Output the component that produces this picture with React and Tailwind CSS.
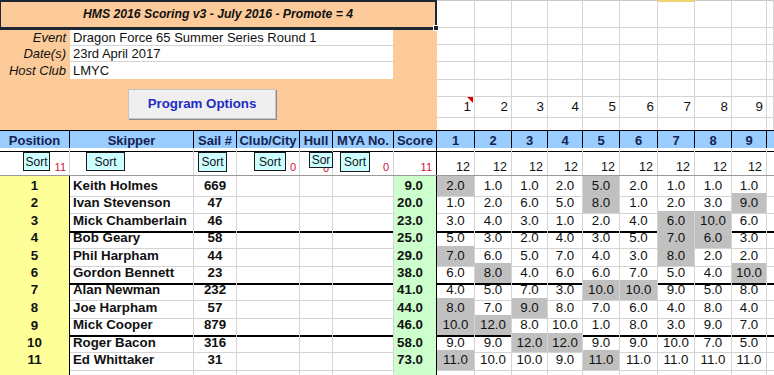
import React from 'react';

// column tracks shared by the header, sort row and result rows
const COLS = 'grid grid-cols-[70px_124px_43px_63px_33px_61px_43px_38px_37px_36px_35px_37px_38px_37px_37px_35px_1fr]';
const RACE_COLS = 'grid grid-cols-[38px_37px_36px_35px_37px_38px_37px_37px_35px_1fr]';

const RACES = [1, 2, 3, 4, 5, 6, 7, 8, 9];

// drop = races thrown out of the total (shaded grey), cut = promotion line under the row
const results = [
    { pos: 1, name: 'Keith Holmes', sail: 669, score: '9.0', races: [2, 1, 1, 2, 5, 2, 1, 1, 1], drop: [0, 4] },
    { pos: 2, name: 'Ivan Stevenson', sail: 47, score: '20.0', races: [1, 2, 6, 5, 8, 1, 2, 3, 9], drop: [4, 8] },
    { pos: 3, name: 'Mick Chamberlain', sail: 46, score: '23.0', races: [3, 4, 3, 1, 2, 4, 6, 10, 6], drop: [6, 7], cut: true },
    { pos: 4, name: 'Bob Geary', sail: 58, score: '25.0', races: [5, 3, 2, 4, 3, 5, 7, 6, 3], drop: [6, 7] },
    { pos: 5, name: 'Phil Harpham', sail: 44, score: '29.0', races: [7, 6, 5, 7, 4, 3, 8, 2, 2], drop: [0, 6] },
    { pos: 6, name: 'Gordon Bennett', sail: 23, score: '38.0', races: [6, 8, 4, 6, 6, 7, 5, 4, 10], drop: [1, 8], cut: true },
    { pos: 7, name: 'Alan Newman', sail: 232, score: '41.0', races: [4, 5, 7, 3, 10, 10, 9, 5, 8], drop: [4, 5] },
    { pos: 8, name: 'Joe Harpham', sail: 57, score: '44.0', races: [8, 7, 9, 8, 7, 6, 4, 8, 4], drop: [0, 2] },
    { pos: 9, name: 'Mick Cooper', sail: 879, score: '46.0', races: [10, 12, 8, 10, 1, 8, 3, 9, 7], drop: [0, 1], cut: true },
    { pos: 10, name: 'Roger Bacon', sail: 316, score: '58.0', races: [9, 9, 12, 12, 9, 9, 10, 7, 5], drop: [2, 3] },
    { pos: 11, name: 'Ed Whittaker', sail: 31, score: '73.0', races: [11, 10, 10, 9, 11, 11, 11, 11, 11], drop: [0, 4] },
];

// heights of the plain sheet rows beside the orange info panel
const TOP_ROWS = ['h-[28px]', 'h-[17px]', 'h-[17px]', 'h-[18px]', 'h-[17px]', 'h-[16px]', 'h-[17px]'];

const SortButton = ({ className, label = 'Sort' }) => (
    <div className={`absolute top-[4px] z-10 flex items-center justify-center bg-[#ccffff] border border-[#1a1a1a] text-[12px] leading-none text-[#111] ${className}`}>
        {label}
    </div>
);

const Count = ({ children }) => (
    <span className="text-[11px] leading-[13px] text-[#d0103a]">{children}</span>
);

const ResultRow = ({ r }) => {
    const line = r.cut ? 'border-b-2 border-b-black' : 'border-b border-b-[#d4d4d4]';
    return (
        <div className={`${COLS} h-[17.4px] text-[13.3px]`}>
            <div className="flex items-center justify-center bg-[#ffff99] font-bold border-r border-r-black border-b border-b-[#bdbdbd]">{r.pos}</div>
            <div className={`flex items-center pl-[3px] font-bold whitespace-nowrap border-r border-r-[#d4d4d4] ${line}`}>{r.name}</div>
            <div className={`flex items-center justify-center font-bold border-r border-r-[#d4d4d4] ${line}`}>{r.sail}</div>
            <div className={`border-r border-r-[#d4d4d4] ${line}`} />
            <div className={`border-r border-r-[#d4d4d4] ${line}`} />
            <div className={`border-r border-r-[#d4d4d4] ${line}`} />
            <div className={`flex items-center justify-end pr-[13px] bg-[#ccffcc] font-bold border-r border-r-black ${line}`}>{r.score}</div>
            {r.races.map((v, i) => (
                <div
                    key={i}
                    className={`flex items-center justify-center border-r border-r-[#d4d4d4] ${line} ${r.drop.includes(i) ? 'bg-[#c0c0c0]' : ''}`}
                >
                    {v.toFixed(1)}
                </div>
            ))}
            <div className={line} />
        </div>
    );
};

export default function App() {
    return (
        <div className="w-[774px] h-[375px] overflow-hidden bg-white text-[#111] font-['Liberation_Sans',Arial,sans-serif]">
            {/* event info panel + sheet cells to its right */}
            <div className="flex h-[130px]">
                <div className="w-[437px] shrink-0 bg-[#fccb99] flex flex-col">
                    <div className="relative h-[30px] flex items-center justify-center border-t-2 border-l border-r-2 border-b-[3px] border-[#1c2733]">
                        <span className="font-bold italic text-[12.2px]">HMS 2016 Scoring v3 - July 2016 - Promote = 4</span>
                        <span className="absolute -right-[4px] -bottom-[4px] z-20 w-[6px] h-[6px] bg-[#1c2733] border border-white" />
                    </div>
                    <div className="flex text-[13px]">
                        <div className="w-[70px] flex flex-col items-end pr-[4px] italic">
                            <div className="h-[16px] flex items-center">Event</div>
                            <div className="h-[16px] flex items-center">Date(s)</div>
                            <div className="h-[17px] flex items-center">Host Club</div>
                        </div>
                        <div className="w-[323px] bg-white flex flex-col">
                            <div className="h-[16px] flex items-center pl-[3px] border-b border-[#d4d4d4]">Dragon Force 65 Summer Series Round 1</div>
                            <div className="h-[16px] flex items-center pl-[3px] border-b border-[#d4d4d4]">23rd April 2017</div>
                            <div className="h-[17px] flex items-center pl-[3px]">LMYC</div>
                        </div>
                    </div>
                    <button className="ml-[128px] mt-[10px] w-[148px] h-[30px] bg-[#efefef] border border-[#c4c4c4] shadow-[1px_1px_0_#8c8c8c] text-[13.3px] font-bold text-[#1f2bc4]">
                        Program Options
                    </button>
                </div>
                <div className="flex-1 flex flex-col">
                    {TOP_ROWS.map((h, row) => (
                        <div key={row} className={`${RACE_COLS} ${h}`}>
                            {[...RACES, null].map((n, col) => (
                                <div
                                    key={col}
                                    className={`relative flex items-center justify-end pr-[3px] text-[13.3px] border-r border-r-[#d4d4d4] ${row < 6 ? 'border-b border-b-[#d4d4d4]' : ''} ${row === 0 ? (col === 6 ? 'border-t-2 border-t-[#f2d46e]' : 'border-t border-t-[#c8c8c8]') : ''}`}
                                >
                                    {row === 5 && n}
                                    {row === 5 && col === 0 && (
                                        <svg className="absolute right-[1px] top-0" width="6" height="6" viewBox="0 0 6 6">
                                            <path d="M0 0H6V6Z" fill="#e00000" />
                                        </svg>
                                    )}
                                </div>
                            ))}
                        </div>
                    ))}
                </div>
            </div>

            {/* column headings */}
            <div className={`${COLS} h-[18px] border-t border-black bg-[#99ccff] text-[13px] font-bold text-[#14224f]`}>
                {['Position', 'Skipper', 'Sail #', 'Club/City', 'Hull', 'MYA No.', 'Score', ...RACES].map((t) => (
                    <div key={t} className="flex items-center justify-center whitespace-nowrap border-r border-b border-black">{t}</div>
                ))}
                <div className="border-b border-black" />
            </div>

            {/* sort buttons and counts */}
            <div className={`${COLS} h-[28px] border-b border-b-[#9a9a9a]`}>
                <div className="relative flex items-end justify-end pr-[3px] pb-[1px] border-r border-r-[#d4d4d4]">
                    <Count>11</Count>
                    <SortButton className="left-[23px] w-[27px] h-[19px]" />
                </div>
                <div className="relative border-r border-r-[#d4d4d4]">
                    <SortButton className="left-[16px] w-[39px] h-[19px]" />
                </div>
                <div className="relative border-r border-r-[#d4d4d4]">
                    <SortButton className="left-[4px] w-[29px] h-[20px]" />
                </div>
                <div className="relative flex items-end justify-end pr-[3px] pb-[1px] border-r border-r-[#d4d4d4]">
                    <Count>0</Count>
                    <SortButton className="left-[17px] w-[32px] h-[19px]" />
                </div>
                <div className="relative flex items-end justify-end pr-[3px] pb-0 border-r border-r-[#d4d4d4]">
                    <Count>0</Count>
                    <SortButton className="left-[9px] w-[24px] h-[16px] items-start pt-[1px]" label="Sor" />
                </div>
                <div className="relative flex items-end justify-end pr-[4px] pb-[1px] border-r border-r-[#d4d4d4]">
                    <Count>0</Count>
                    <SortButton className="left-[7px] w-[30px] h-[20px]" />
                </div>
                <div className="flex items-end justify-end pr-[4px] pb-[1px] border-r border-r-black">
                    <Count>11</Count>
                </div>
                {RACES.map((n) => (
                    <div key={n} className="flex items-end justify-end pr-[4px] pb-[1px] text-[12.5px] leading-[14px] border-r border-r-[#d4d4d4]">12</div>
                ))}
                <div />
            </div>

            {results.map((r) => (
                <ResultRow key={r.pos} r={r} />
            ))}

            {/* next empty sheet row */}
            <div className={`${COLS} h-[20px]`}>
                <div className="bg-[#ffff99] border-r border-r-black" />
                <div className="border-r border-r-[#d4d4d4]" />
                <div className="border-r border-r-[#d4d4d4]" />
                <div className="border-r border-r-[#d4d4d4]" />
                <div className="border-r border-r-[#d4d4d4]" />
                <div className="border-r border-r-[#d4d4d4]" />
                <div className="bg-[#ccffcc] border-r border-r-black" />
                {RACES.map((n) => (
                    <div key={n} className="border-r border-r-[#d4d4d4]" />
                ))}
                <div />
            </div>
        </div>
    );
}
